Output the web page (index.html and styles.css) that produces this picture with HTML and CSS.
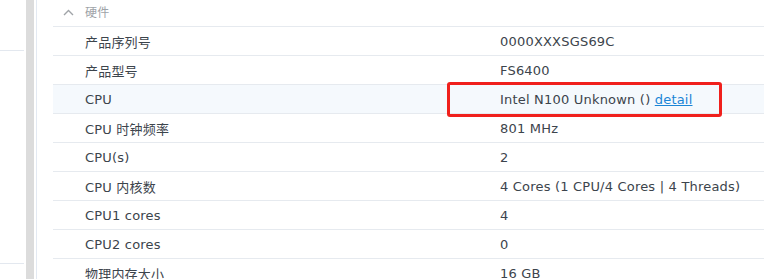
FILE: index.html
```html
<!DOCTYPE html>
<html lang="zh">
<head>
<meta charset="utf-8">
<link rel="stylesheet" href="styles.css">
</head>
<body>
<div class="app">
  <aside class="side">
    <div class="side-item"></div>
    <div class="side-item tall"></div>
  </aside>
  <div class="scroll"></div>
  <div class="divider"></div>
  <main class="content">
    <div class="group-head">
      <svg class="chev" width="11" height="7" viewBox="0 0 11 7"><path d="M1 6 L5.5 1.5 L10 6" fill="none" stroke="#a0a4a8" stroke-width="1.4"/></svg>
      <span class="group-title">硬件</span>
    </div>
    <div class="row"><div class="k">产品序列号</div><div class="v">0000XXXSGS69C</div></div>
    <div class="row"><div class="k">产品型号</div><div class="v">FS6400</div></div>
    <div class="row hl"><div class="k">CPU</div><div class="v">Intel N100 Unknown () <a class="link" href="#">detail</a><span class="mark"></span></div></div>
    <div class="row"><div class="k">CPU 时钟频率</div><div class="v">801 MHz</div></div>
    <div class="row"><div class="k">CPU(s)</div><div class="v">2</div></div>
    <div class="row"><div class="k">CPU 内核数</div><div class="v">4 Cores (1 CPU/4 Cores | 4 Threads)</div></div>
    <div class="row"><div class="k">CPU1 cores</div><div class="v">4</div></div>
    <div class="row"><div class="k">CPU2 cores</div><div class="v">0</div></div>
    <div class="row"><div class="k">物理内存大小</div><div class="v">16 GB</div></div>
  </main>
</div>
</body>
</html>
```
FILE: styles.css
```css
html, body {
  margin: 0;
  padding: 0;
  background: #fff;
  overflow: hidden;
}
body {
  font-family: "DejaVu Sans", "Noto Sans CJK SC", sans-serif;
  font-size: 13px;
  letter-spacing: 0.2px;
  color: #3c444c;
}
.app {
  display: flex;
  height: 279px;
  width: 764px;
}
.side {
  width: 24px;
  display: flex;
  flex-direction: column;
  margin-right: 2px;
}
.side-item {
  height: 51px;
  border-bottom: 1px solid #e3e8ef;
  box-sizing: border-box;
  flex: none;
}
.side-item.tall {
  height: 213px;
}
.scroll {
  width: 8px;
  background: #dcdcdc;
  margin-right: 2px;
}
.divider {
  width: 1px;
  background: #e3e9f2;
}
.content {
  flex: 1;
  padding-left: 16px;
  position: relative;
}
.group-head {
  height: 27px;
  display: flex;
  align-items: center;
  border-bottom: 1px solid #e6eaef;
  box-sizing: border-box;
}
.chev {
  margin-left: 10px;
  margin-right: 11px;
  margin-top: -2px;
}
.group-title {
  color: #9ea3a8;
  font-size: 12px;
  margin-top: -3px;
}
.row {
  display: flex;
  height: 29px;
  align-items: center;
  border-bottom: 1px solid #e6eaef;
  box-sizing: border-box;
}
.row.hl {
  background: #f5f9fd;
}
.k {
  width: 394px;
  padding-left: 32px;
  box-sizing: border-box;
  flex: none;
}
.v {
  padding-left: 53px;
  position: relative;
  height: 100%;
  display: flex;
  align-items: center;
  white-space: pre;
}
.link {
  color: #1a85d6;
  text-decoration: underline;
}
.mark {
  position: absolute;
  left: 0;
  top: -3px;
  width: 275px;
  height: 35px;
  border: 3px solid #f0201c;
  border-radius: 3px;
  box-sizing: border-box;
}
```
